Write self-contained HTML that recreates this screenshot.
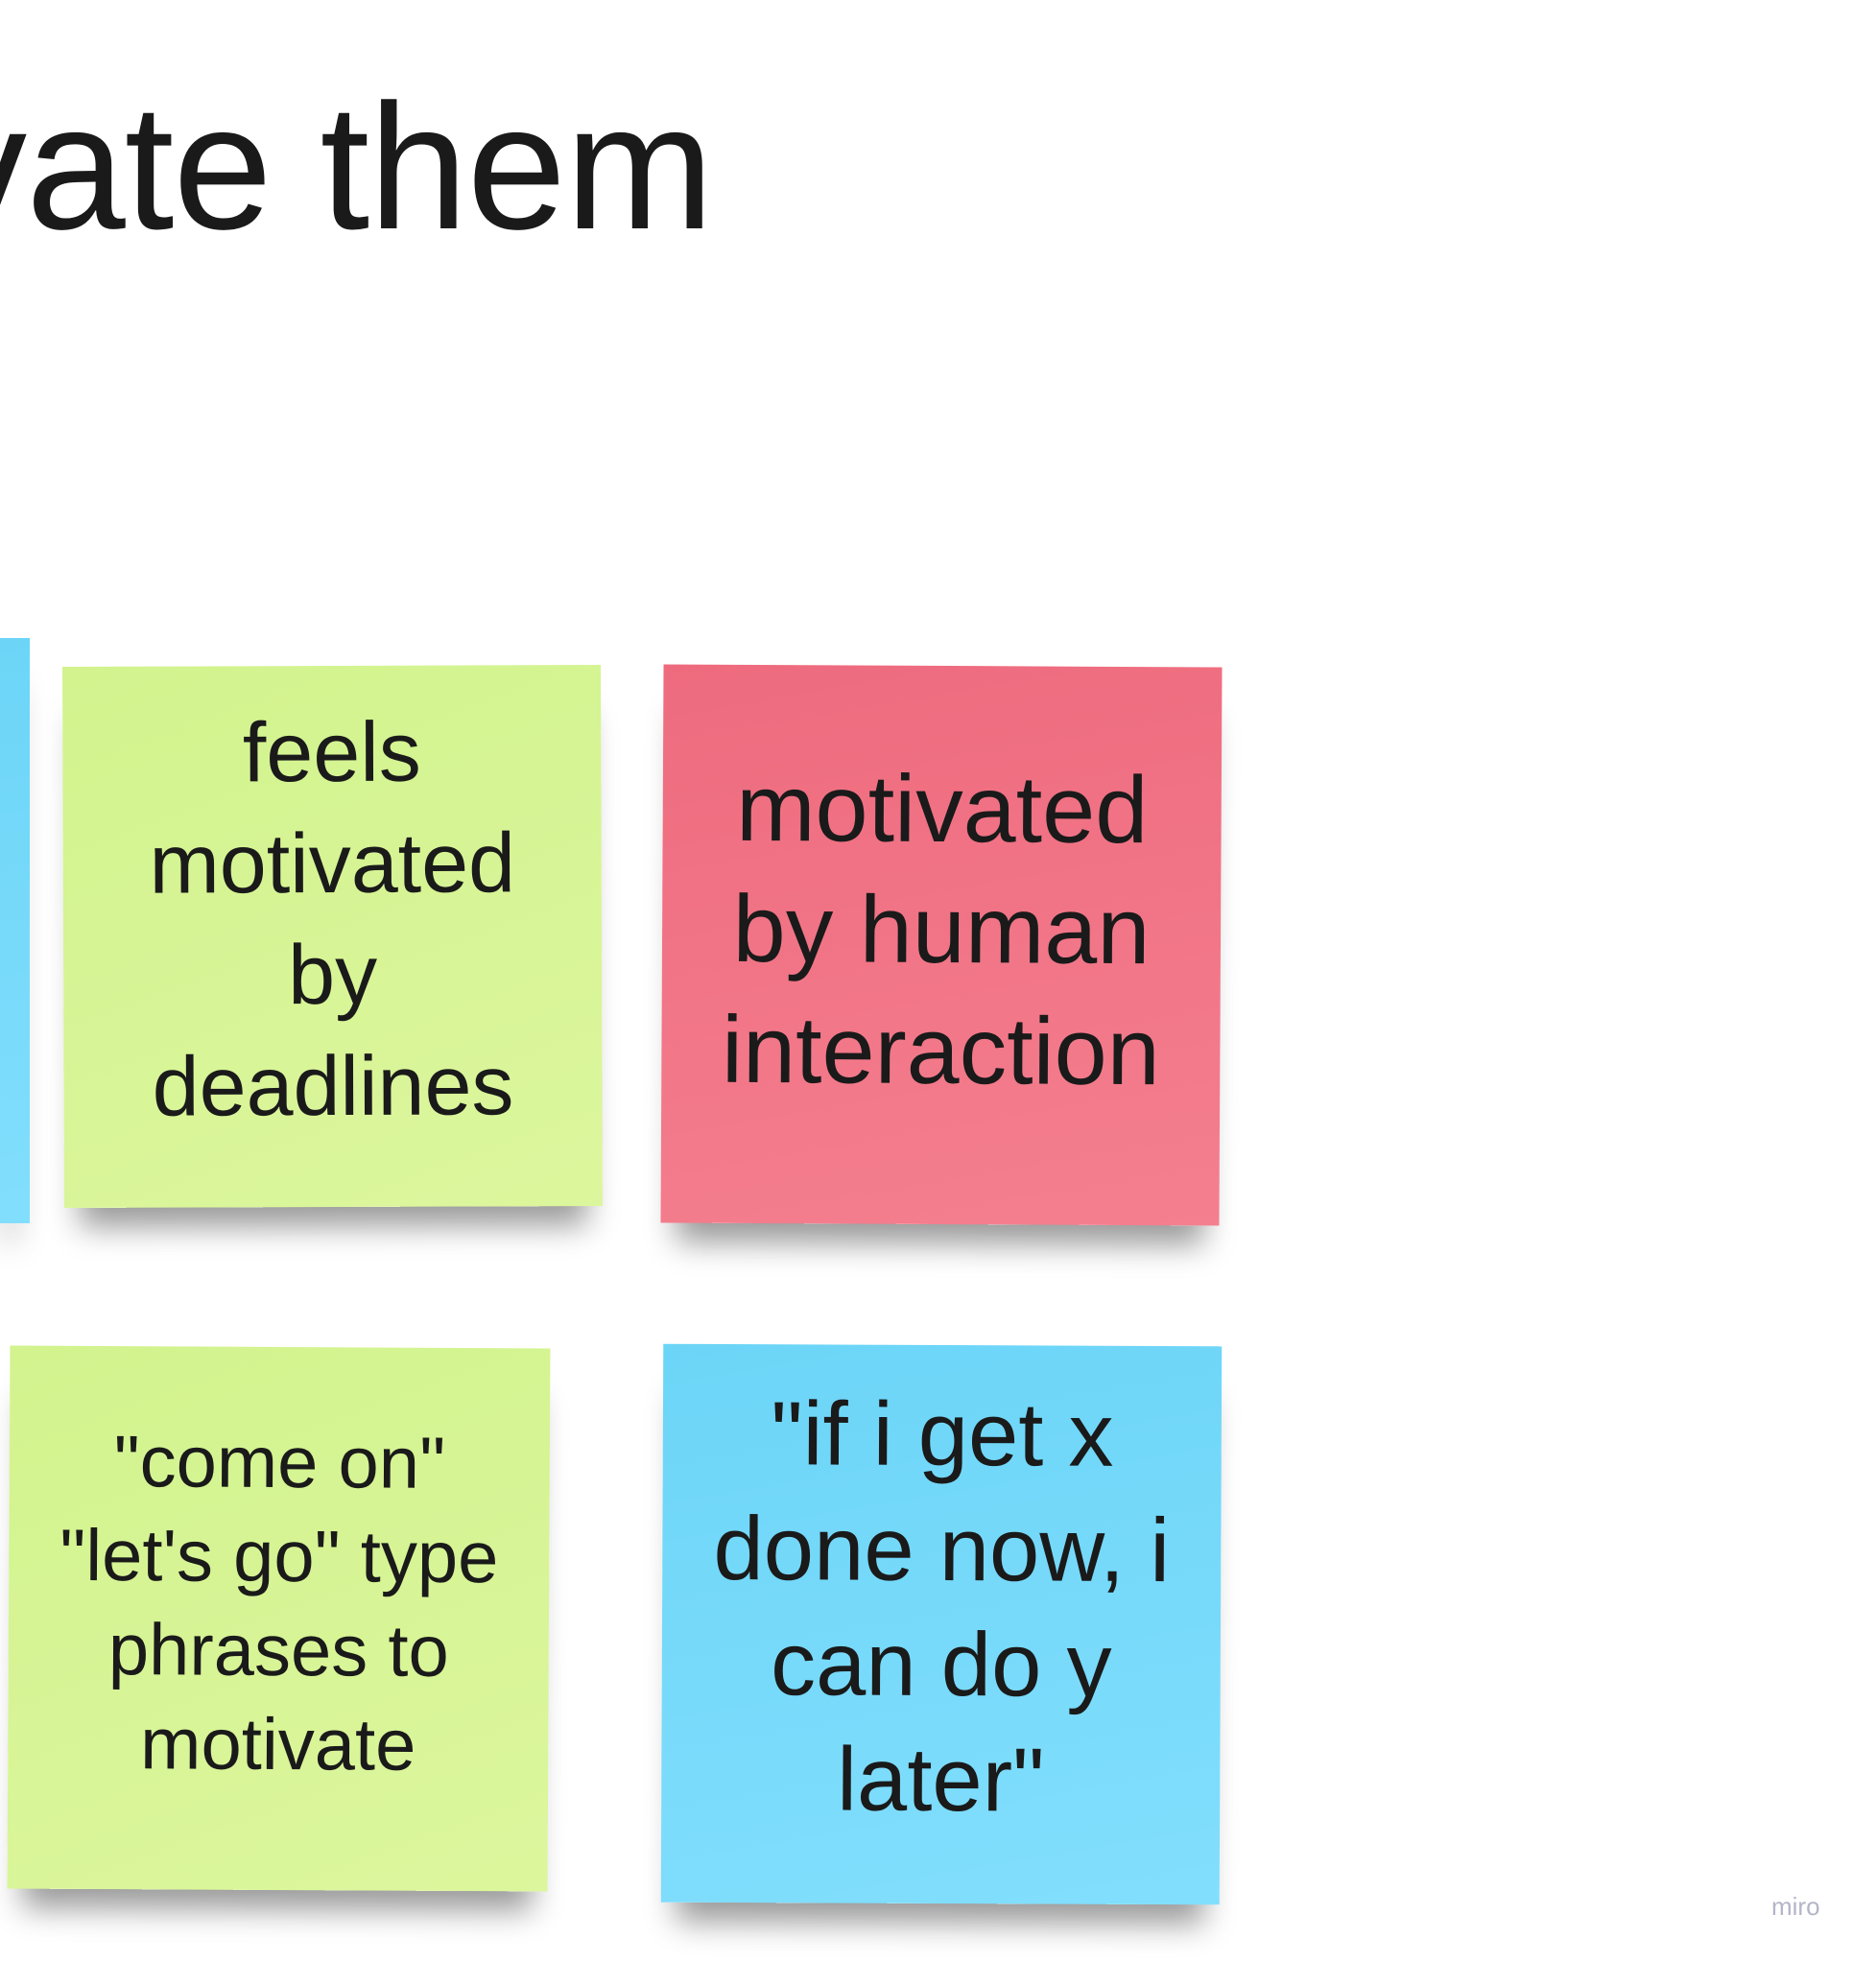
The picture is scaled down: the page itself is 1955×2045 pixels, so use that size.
<!DOCTYPE html>
<html><head><meta charset="utf-8"><style>
html,body{margin:0;padding:0;width:1955px;height:2045px;background:#fff;overflow:hidden;position:relative;font-family:"Liberation Sans",sans-serif;color:#1a1a1a}
.t{position:absolute;right:1212px;top:82px;font-size:186px;white-space:nowrap;line-height:1;letter-spacing:-1px;text-align:right}
.n{position:absolute;box-shadow:0 36px 32px -16px rgba(0,0,0,0.4)}
.n div{position:absolute;left:0;right:0;text-align:center;white-space:nowrap}
.g{background:linear-gradient(160deg,#d2f38e,#dcf69d)}
.p{background:linear-gradient(170deg,#ee6b7e,#f47f8f)}
.b{background:linear-gradient(170deg,#6cd5f7,#82defd)}
.m{position:absolute;left:1846px;top:1972px;font-size:26px;color:#b3b5c8}
</style></head><body>
<div class="t">vate them</div>
<div class="n b" style="left:-10px;top:665px;width:41px;height:610px"></div>
<div class="n g" style="left:66px;top:694px;width:561px;height:564px;transform:rotate(-0.2deg)">
<div style="top:32px;font-size:88px;line-height:116px">feels<br>motivated<br>by<br>deadlines</div></div>
<div class="n p" style="left:690px;top:694px;width:582px;height:582px;transform:rotate(0.3deg)">
<div style="top:86px;font-size:99px;line-height:126px">motivated<br>by human<br>interaction</div></div>
<div class="n g" style="left:9px;top:1404px;width:563px;height:566px;transform:rotate(0.3deg)">
<div style="top:72px;font-size:76px;line-height:98px">"come on"<br>"let's go" type<br>phrases to<br>motivate</div></div>
<div class="n b" style="left:690px;top:1402px;width:582px;height:582px;transform:rotate(0.25deg)">
<div style="top:33px;font-size:94px;line-height:120px">"if i get x<br>done now, i<br>can do y<br>later"</div></div>
<div class="m">miro</div>
</body></html>
